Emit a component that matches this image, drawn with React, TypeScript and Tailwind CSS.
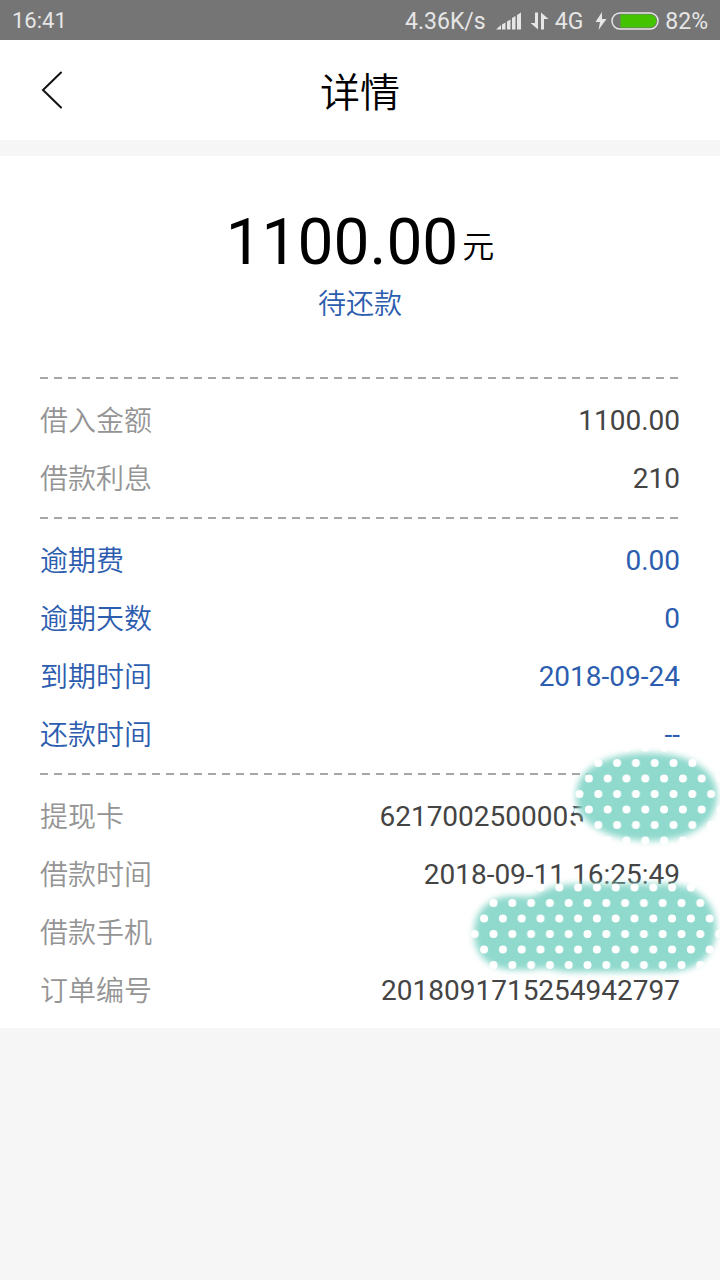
import React from "react";
import clsx from "clsx";

interface DetailItem {
    label: string;
    value: string;
    cover?: "card" | "phone";
}

interface DetailGroup {
    id: string;
    highlight?: boolean;
    items: DetailItem[];
}

const groups: DetailGroup[] = [
    {
        id: "loan",
        items: [
            { label: "借入金额", value: "1100.00" },
            { label: "借款利息", value: "210" },
        ],
    },
    {
        id: "overdue",
        highlight: true,
        items: [
            { label: "逾期费", value: "0.00" },
            { label: "逾期天数", value: "0" },
            { label: "到期时间", value: "2018-09-24" },
            { label: "还款时间", value: "--" },
        ],
    },
    {
        id: "order",
        items: [
            { label: "提现卡", value: "6217002500005", cover: "card" },
            { label: "借款时间", value: "2018-09-11 16:25:49" },
            { label: "借款手机", value: "", cover: "phone" },
            { label: "订单编号", value: "2018091715254942797" },
        ],
    },
];

function StatusBar() {
    return (
        <div className="flex h-10 items-center justify-between bg-[#757575] px-3 pt-0.5 text-[#e6e6e6]">
            <span className="text-[22px] leading-none">16:41</span>
            <div className="flex items-center text-[23px] leading-none">
                <span>4.36K/s</span>
                {/* signal */}
                <svg className="ml-2.5 h-[18px] w-[26px]" viewBox="0 0 26 18" fill="currentColor" aria-hidden="true">
                    <path d="M0 17.5 5 13v4.5zM6 12.5l3.5-2v7H6zM11 9.5l3.5-2v10H11zM16 6l3.5-2v13.5H16zM21 3l4-2.5v17h-4z" />
                </svg>
                {/* data up / down */}
                <svg className="ml-2 h-[18px] w-[19px]" viewBox="0 0 19 18" fill="currentColor" aria-hidden="true">
                    <path d="M5 .5h3v17L.5 11H5zM11 17.5V.5L18.5 7H14v10.5z" />
                </svg>
                <span className="ml-1.5">4G</span>
                <svg className="ml-3 h-[18px] w-3" viewBox="0 0 12 18" fill="currentColor" aria-hidden="true">
                    <path d="M7 0 .5 10h4.5L3.5 18l8-11H7z" />
                </svg>
                {/* battery */}
                <svg className="ml-1 h-[18px] w-12" viewBox="0 0 48 18" aria-hidden="true">
                    <rect x="1" y="1" width="46" height="16" rx="8" fill="none" stroke="#e6e6e6" strokeWidth="1.5" />
                    <path d="M9.5 2.5H39a6.5 6.5 0 0 1 0 13H9.5z" fill="#44c300" />
                </svg>
                <span className="ml-1.5">82%</span>
            </div>
        </div>
    );
}

function CardCover() {
    return (
        <svg
            className="pointer-events-none absolute -top-10 -right-10 z-10 h-[100px] w-[152px]"
            viewBox="0 0 152 100"
            aria-hidden="true"
        >
            <defs>
                <filter id="card-blur" x="-10%" y="-10%" width="120%" height="120%">
                    <feGaussianBlur stdDeviation="3" />
                </filter>
                <pattern id="card-dots" x="20.9" y="8" width="18.8" height="31" patternUnits="userSpaceOnUse">
                    <circle cx="9.4" cy="8" r="4" fill="#fff" />
                    <circle cx="0" cy="23.5" r="4" fill="#fff" />
                    <circle cx="18.8" cy="23.5" r="4" fill="#fff" />
                </pattern>
                <clipPath id="card-clip">
                    <rect x="2" y="0" width="150" height="100" rx="36" />
                </clipPath>
            </defs>
            <path
                d="M8 49C8 20 40 6 80 6s69 15 69 43-28 45-67 45S8 78 8 49z"
                fill="#90d9cd"
                filter="url(#card-blur)"
            />
            <rect width="152" height="100" fill="url(#card-dots)" clipPath="url(#card-clip)" />
        </svg>
    );
}

function PhoneCover() {
    return (
        <svg
            className="pointer-events-none absolute -top-7 -right-10 z-10 h-[104px] w-[256px]"
            viewBox="0 0 256 104"
            aria-hidden="true"
        >
            <defs>
                <filter id="phone-blur" x="-10%" y="-10%" width="120%" height="120%">
                    <feGaussianBlur stdDeviation="3" />
                </filter>
                <pattern id="phone-dots" x="20.1" y="4" width="18.8" height="31" patternUnits="userSpaceOnUse">
                    <circle cx="9.4" cy="24" r="4" fill="#fff" />
                    <circle cx="0" cy="8.5" r="4" fill="#fff" />
                    <circle cx="18.8" cy="8.5" r="4" fill="#fff" />
                </pattern>
                <clipPath id="phone-clip">
                    <path d="M4 58C4 30 22 17 50 17c20 0 16-12 50-12h104c32 0 52 20 52 48s-20 48-50 48H50C24 101 4 86 4 58z" />
                </clipPath>
            </defs>
            <path
                d="M10 58c0-24 17-37 39-37 14 0 18 2 27-3 12-7 22-9 38-9h88c30 0 50 17 50 44 0 28-19 44-50 44h-92c-20 0-24-5-36-3-7 1-10 1-23 1C26 95 10 81 10 58z"
                fill="#90d9cd"
                filter="url(#phone-blur)"
            />
            <rect width="256" height="104" fill="url(#phone-dots)" clipPath="url(#phone-clip)" />
        </svg>
    );
}

function DetailRow({ item, highlight }: { item: DetailItem; highlight?: boolean }) {
    return (
        <div className="relative flex h-[58px] items-center justify-between">
            <dt className={clsx("pt-1 font-[350]", highlight ? "text-[#2c5daf]" : "text-[#949494]")}>{item.label}</dt>
            <dd
                className={clsx(
                    "pt-0.5",
                    highlight ? "text-[#2c5daf]" : "text-[#444]",
                    item.cover === "card" && "pr-24"
                )}
            >
                {item.value}
            </dd>
            {item.cover === "card" && <CardCover />}
            {item.cover === "phone" && <PhoneCover />}
        </div>
    );
}

export default function App() {
    return (
        <div className="min-h-screen bg-[#f6f6f6] font-[Roboto,'Noto_Sans_CJK_SC',sans-serif]">
            <StatusBar />

            <header className="grid h-[100px] grid-cols-[1fr_auto_1fr] items-center bg-white px-10">
                <button type="button" aria-label="返回" className="w-6">
                    <svg className="h-10 w-6" viewBox="0 0 24 40" fill="none" stroke="#111" strokeWidth="2" aria-hidden="true">
                        <path d="M21 2.5 3 20l18 17.5" strokeLinecap="round" />
                    </svg>
                </button>
                <h1 className="pt-2 text-[40px] leading-none font-[350] text-black">详情</h1>
            </header>

            <main className="mt-4 overflow-hidden bg-white px-10 pb-[9px]">
                <div className="flex h-[221px] flex-col items-center pt-12">
                    <p className="flex items-center text-black">
                        <span className="text-[64px] leading-[78px]">1100.00</span>
                        <span className="ml-1 pt-2 text-[32px] leading-none font-[350]">元</span>
                    </p>
                    <p className="text-[28px] leading-[46px] font-[350] text-[#2c5daf]">待还款</p>
                </div>

                {groups.map((group, index) => (
                    <section key={group.id}>
                        <div className="h-0.5 bg-[repeating-linear-gradient(90deg,#a6a6a6_0_8px,transparent_8px_14px)]" />
                        <dl className={clsx("pt-3 text-[28px] leading-10", index < groups.length - 1 && "pb-2.5")}>
                            {group.items.map((item) => (
                                <DetailRow key={item.label} item={item} highlight={group.highlight} />
                            ))}
                        </dl>
                    </section>
                ))}
            </main>
        </div>
    );
}
